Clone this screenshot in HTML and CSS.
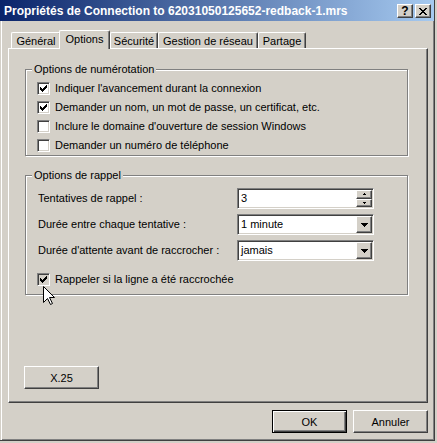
FILE: index.html
```html
<!DOCTYPE html>
<html lang="fr">
<head>
  <meta charset="UTF-8">
  <title>Propriétés de Connection</title>
  <link rel="stylesheet" href="styles.css">
</head>
<body>
  <div class="window">
    <div class="titlebar">
      <span class="title-text">Propriétés de Connection to 62031050125652-redback-1.mrs</span>
      <span class="caption-btn help">?</span>
      <span class="caption-btn close">
        <svg width="8" height="7" viewBox="0 0 8 7"><path d="M0 0h2v1H0zM6 0h2v1H6zM1 1h2v1H1zM5 1h2v1H5zM2 2h4v1H2zM3 3h2v1H3zM2 4h4v1H2zM1 5h2v1H1zM5 5h2v1H5zM0 6h2v1H0zM6 6h2v1H6z" fill="#000"/></svg>
      </span>
    </div>

    <div class="client">
      <!-- onglets -->
      <div class="tabs">
        <div class="tab tab-general">Général</div>
        <div class="tab tab-options active">Options</div>
        <div class="tab tab-security">Sécurité</div>
        <div class="tab tab-network">Gestion de réseau</div>
        <div class="tab tab-share">Partage</div>
      </div>

      <div class="panel">
        <div class="group group-dial">
          <span class="group-title">Options de numérotation</span>
          <label class="check-row">
            <span class="checkbox"><svg width="7" height="7" viewBox="0 0 7 7"><path d="M0 2h1v3H0zM1 3h1v3H1zM2 4h1v3H2zM3 3h1v3H3zM4 2h1v3H4zM5 1h1v3H5zM6 0h1v3H6z" fill="#000"/></svg></span>
            <span class="check-text">Indiquer l'avancement durant la connexion</span>
          </label>
          <label class="check-row">
            <span class="checkbox"><svg width="7" height="7" viewBox="0 0 7 7"><path d="M0 2h1v3H0zM1 3h1v3H1zM2 4h1v3H2zM3 3h1v3H3zM4 2h1v3H4zM5 1h1v3H5zM6 0h1v3H6z" fill="#000"/></svg></span>
            <span class="check-text">Demander un nom, un mot de passe, un certificat, etc.</span>
          </label>
          <label class="check-row">
            <span class="checkbox"></span>
            <span class="check-text">Inclure le domaine d'ouverture de session Windows</span>
          </label>
          <label class="check-row">
            <span class="checkbox"></span>
            <span class="check-text">Demander un numéro de téléphone</span>
          </label>
        </div>

        <div class="group group-callback">
          <span class="group-title">Options de rappel</span>
          <div class="fields">
            <div class="field-row">
              <span class="field-label">Tentatives de rappel :</span>
              <div class="spin">
                <span class="value">3</span>
                <span class="spin-btns">
                  <span class="spin-btn"><svg width="3" height="2" viewBox="0 0 3 2"><path d="M1 0h1v1H1zM0 1h3v1H0z" fill="#000"/></svg></span>
                  <span class="spin-btn"><svg width="3" height="2" viewBox="0 0 3 2"><path d="M0 0h3v1H0zM1 1h1v1H1z" fill="#000"/></svg></span>
                </span>
              </div>
            </div>
            <div class="field-row">
              <span class="field-label">Durée entre chaque tentative :</span>
              <div class="combo">
                <span class="value">1 minute</span>
                <span class="drop-btn"><svg width="7" height="4" viewBox="0 0 7 4"><path d="M0 0h7v1H0zM1 1h5v1H1zM2 2h3v1H2zM3 3h1v1H3z" fill="#000"/></svg></span>
              </div>
            </div>
            <div class="field-row">
              <span class="field-label">Durée d'attente avant de raccrocher :</span>
              <div class="combo">
                <span class="value">jamais</span>
                <span class="drop-btn"><svg width="7" height="4" viewBox="0 0 7 4"><path d="M0 0h7v1H0zM1 1h5v1H1zM2 2h3v1H2zM3 3h1v1H3z" fill="#000"/></svg></span>
              </div>
            </div>
          </div>
          <label class="check-row">
            <span class="checkbox pressed"><svg width="7" height="7" viewBox="0 0 7 7"><path d="M0 2h1v3H0zM1 3h1v3H1zM2 4h1v3H2zM3 3h1v3H3zM4 2h1v3H4zM5 1h1v3H5zM6 0h1v3H6z" fill="#000"/></svg></span>
            <span class="check-text">Rappeler si la ligne a été raccrochée</span>
          </label>
        </div>

        <button class="btn btn-x25">X.25</button>
      </div>

      <div class="footer">
        <button class="btn btn-default">OK</button>
        <button class="btn">Annuler</button>
      </div>
    </div>

    <!-- pointeur de souris -->
    <svg class="cursor" width="13" height="20" viewBox="0 0 13 20">
      <path d="M0.5 0.5V16.5L4.5 12.5L7.5 18.5L9.5 17.5L6.5 11.5H11.5Z" fill="#fff" stroke="#000" stroke-width="1"/>
    </svg>
  </div>
</body>
</html>
```

FILE: styles.css
```css
body {
  margin: 0;
  background: #d4d0c8;
  font-family: "Liberation Sans", Arial, sans-serif;
  font-size: 11px;
  color: #000;
}
.window {
  position: relative;
  width: 435px;
  height: 441px;
  box-sizing: border-box;
  display: flex;
  flex-direction: column;
  border-right: 1px solid #404040;
  border-bottom: 1px solid #404040;
}

/* barre de titre */
.titlebar {
  flex-shrink: 0;
  height: 21px;
  display: flex;
  align-items: flex-start;
  background: linear-gradient(to right, #0a246a, #a6caf0);
  color: #fff;
  font-weight: bold;
  font-size: 12px;
}
.title-text {
  flex: 1;
  padding: 2px 0 0 4px;
  line-height: 19px;
  white-space: nowrap;
  overflow: hidden;
}
.caption-btn {
  width: 16px;
  height: 14px;
  box-sizing: border-box;
  margin-top: 4px;
  display: flex;
  align-items: center;
  justify-content: center;
  background: #d4d0c8;
  color: #000;
  border: 1px solid;
  border-color: #fff #404040 #404040 #fff;
  box-shadow: inset -1px -1px #808080;
}
.help {
  margin-right: 2px;
  font-size: 12px;
  line-height: 12px;
}
.close { margin-right: 3px; }

.client {
  flex: 1;
  border-left: 1px solid #d4d0c8;
  box-shadow: inset 1px 0 #fff, inset -1px -1px #808080;
  padding: 11px 0 0 7px;
}

/* onglets */
.tabs {
  display: flex;
  align-items: flex-start;
  height: 16px;
  margin-left: 3px;
}
.tab {
  height: 16px;
  box-sizing: border-box;
  padding-top: 1px;
  line-height: 14px;
  text-align: center;
  white-space: nowrap;
  background: #d4d0c8;
  border: 1px solid;
  border-bottom: 0;
  border-color: #fff #404040 #fff #fff;
  border-radius: 2px 2px 0 0;
  box-shadow: inset -1px 0 #808080;
}
.tab-general { width: 50px; }
.tab-options { width: 51px; }
.tab-security { width: 48px; }
.tab-network { width: 100px; }
.tab-share { width: 48px; }
.tab.active {
  position: relative;
  z-index: 1;
  height: 19px;
  margin: -2px 0 -1px -2px;
}

.panel {
  width: 420px;
  height: 355px;
  box-sizing: border-box;
  padding: 20px 0 0 16px;
  border: 1px solid;
  border-color: #fff #404040 #404040 #fff;
  box-shadow: inset -1px -1px #808080;
}

/* cadres */
.group {
  position: relative;
  width: 383px;
  box-sizing: border-box;
  padding: 9px 0 0 11px;
  border: 1px solid #808080;
  box-shadow: inset 1px 1px #fff, 1px 1px #fff;
}
.group-title {
  position: absolute;
  top: -7px;
  left: 6px;
  padding: 0 2px;
  line-height: 13px;
  background: #d4d0c8;
}
.group-callback {
  margin-top: 19px;
  padding: 12px 0 5px 11px;
}

.check-row {
  display: flex;
  align-items: center;
  height: 19px;
}
.checkbox {
  width: 13px;
  height: 13px;
  box-sizing: border-box;
  flex-shrink: 0;
  margin-right: 5px;
  padding: 2px 0 0 2px;
  display: flex;
  align-items: flex-start;
  background: #fff;
  border: 1px solid;
  border-color: #808080 #fff #fff #808080;
  box-shadow: inset 1px 1px #404040, inset -1px -1px #d4d0c8;
}
.checkbox.pressed { background: #d4d0c8; }
.check-text { padding-bottom: 1px; }
.group-callback .check-row { margin-top: 9px; }

.fields {
  display: flex;
  flex-direction: column;
  gap: 5px;
  margin-left: 1px;
}
.field-row {
  display: flex;
  height: 21px;
}
.field-label {
  width: 199px;
  line-height: 21px;
}
.spin, .combo {
  width: 137px;
  height: 21px;
  box-sizing: border-box;
  padding: 1px;
  display: flex;
  background: #fff;
  border: 1px solid;
  border-color: #808080 #fff #fff #808080;
  box-shadow: inset 1px 1px #404040, inset -1px -1px #d4d0c8;
}
.value {
  flex: 1;
  padding-left: 2px;
  line-height: 17px;
}
.spin-btns {
  width: 16px;
  display: flex;
  flex-direction: column;
}
.spin-btn, .drop-btn {
  display: flex;
  align-items: center;
  justify-content: center;
  box-sizing: border-box;
  background: #d4d0c8;
  border: 1px solid;
  border-color: #fff #404040 #404040 #fff;
  box-shadow: inset -1px -1px #808080;
}
.spin-btn { flex: 1; }
.drop-btn { width: 16px; }

/* boutons */
.btn {
  width: 75px;
  height: 23px;
  box-sizing: border-box;
  padding: 0;
  font: inherit;
  color: #000;
  background: #d4d0c8;
  border: 1px solid;
  border-color: #fff #404040 #404040 #fff;
  box-shadow: inset -1px -1px #808080;
}
.btn-x25 {
  display: block;
  margin: 71px 0 0 -1px;
}
.btn-default {
  border-color: #000;
  box-shadow: inset 1px 1px #fff, inset -1px -1px #404040, inset -2px -2px #808080;
}
.footer {
  display: flex;
  justify-content: flex-end;
  gap: 6px;
  width: 420px;
  padding-top: 7px;
}

.cursor {
  position: absolute;
  left: 43px;
  top: 286px;
}
```
